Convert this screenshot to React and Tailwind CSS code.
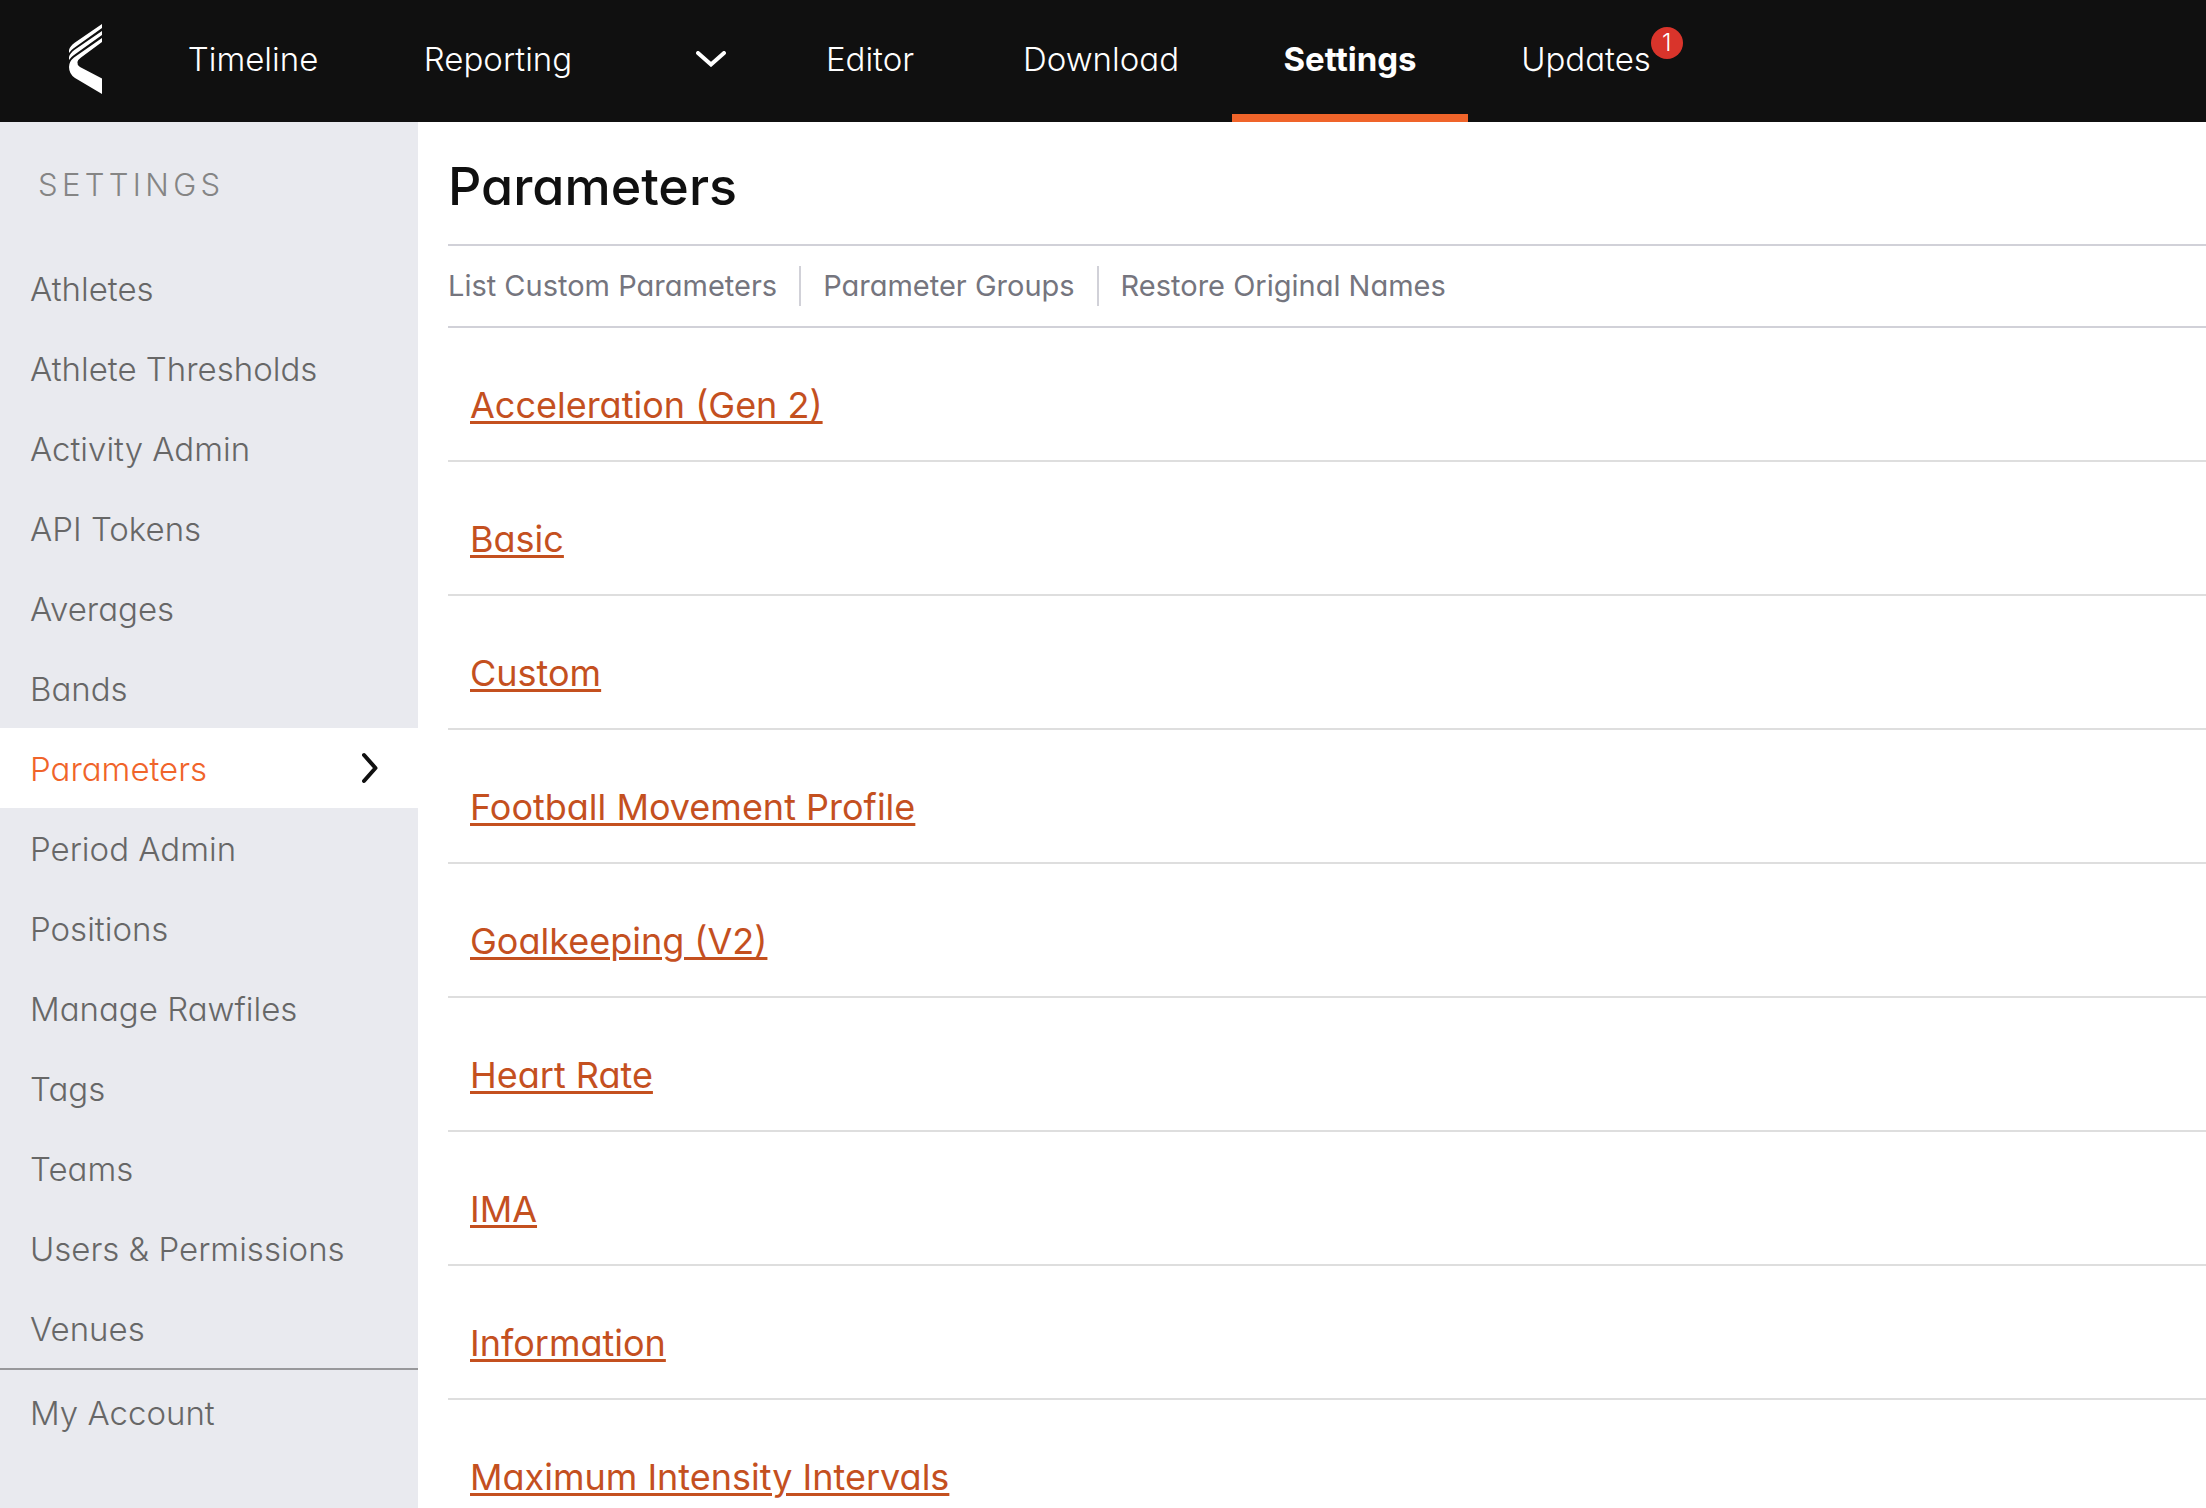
const navItems = [
  { label: 'Timeline', width: 'w-[234px]' },
  { label: 'Reporting', width: 'w-[256px]', hasMenu: true },
  { label: 'Editor', width: 'w-[200px]' },
  { label: 'Download', width: 'w-[262px]' },
  { label: 'Settings', width: 'w-[236px]', active: true },
  { label: 'Updates', width: 'w-[236px]', badge: 1 },
];

const settingsItems = [
  'Athletes',
  'Athlete Thresholds',
  'Activity Admin',
  'API Tokens',
  'Averages',
  'Bands',
  'Parameters',
  'Period Admin',
  'Positions',
  'Manage Rawfiles',
  'Tags',
  'Teams',
  'Users & Permissions',
  'Venues',
];

const actions = ['List Custom Parameters', 'Parameter Groups', 'Restore Original Names'];

const parameterGroups = [
  'Acceleration (Gen 2)',
  'Basic',
  'Custom',
  'Football Movement Profile',
  'Goalkeeping (V2)',
  'Heart Rate',
  'IMA',
  'Information',
  'Maximum Intensity Intervals',
];

function Logo() {
  return (
    <svg viewBox="0 0 33 70" className="h-[70px] w-[33px]" fill="white" aria-hidden="true">
      <path d="M33 0v4L5 24Q2 26 0 29V26Q1 22 6 18.500z" />
      <path d="M33 7v4L5 31Q2 33 0 36V33Q1 29 6 25.500z" />
      <path d="M33 14v4L12 33.500Q5 38.500 11 43L33 54.500V70L6 54Q0 50 0 43 0 37.500 5 33.500z" />
    </svg>
  );
}

function TopNav() {
  return (
    <header className="flex h-[122px] bg-[#101010] text-[33px] font-[350] text-white">
      <a href="#home" aria-label="Home" className="flex w-[136px] shrink-0 items-center pb-1 pl-[69px]">
        <Logo />
      </a>
      <nav className="flex">
        {navItems.map((item) => (
          <div key={item.label} className="flex">
            <a
              href={`#${item.label.toLowerCase()}`}
              className={`flex items-center justify-center border-b-8 pt-1.5 ${item.width} ${
                item.active ? 'border-b-[#f0642a] font-bold' : 'border-b-transparent'
              }`}
            >
              <span className="relative">
                {item.label}
                {item.badge && (
                  <span className="absolute -top-2 left-full flex size-8 items-center justify-center rounded-full bg-[#d9342b] text-2xl">
                    {item.badge}
                  </span>
                )}
              </span>
            </a>
            {item.hasMenu && (
              <button type="button" aria-label="Reporting menu" className="flex w-[144px] items-center justify-end pr-11 pb-1">
                <svg viewBox="0 0 30 16" className="h-4 w-[30px]" fill="none" stroke="white" strokeWidth="4" strokeLinecap="round">
                  <path d="M2 2l13 11.500L28 2" />
                </svg>
              </button>
            )}
          </div>
        ))}
      </nav>
    </header>
  );
}

function Sidebar() {
  return (
    <aside className="w-[418px] shrink-0 bg-[#e9eaef] text-[33px] font-[350] text-[#676767]">
      <h2 className="flex h-[126px] items-center pl-[38px] text-[31px] tracking-[0.14em] text-[#858585]">SETTINGS</h2>
      <ul className="mb-0.5 border-b-2 border-[#98989b]">
        {settingsItems.map((item) => {
          const active = item === 'Parameters';
          return (
            <li key={item}>
              <a
                href="#"
                className={`flex h-20 items-center justify-between pt-1 pr-10 pl-[30px] ${active ? 'bg-white text-[#f0642a]' : ''}`}
              >
                {item}
                {active && (
                  <svg viewBox="0 0 16 32" className="mb-1 h-8 w-4" fill="none" stroke="#101010" strokeWidth="4" strokeLinecap="round" strokeLinejoin="round">
                    <path d="M2 3l11.500 13L2 29" />
                  </svg>
                )}
              </a>
            </li>
          );
        })}
      </ul>
      <a href="#account" className="flex h-20 items-center pt-1 pl-[30px]">
        My Account
      </a>
    </aside>
  );
}

export default function App() {
  return (
    <div className="flex h-screen flex-col overflow-hidden bg-white font-['Inter',sans-serif] [font-feature-settings:'cv11']">
      <TopNav />
      <div className="flex min-h-0 flex-1">
        <Sidebar />
        <main className="min-w-0 flex-1 overflow-hidden pl-[30px]">
          <h1 className="flex h-[122px] items-center pt-2 text-[52px] font-medium text-[#101010]">Parameters</h1>
          <div className="flex h-[84px] items-center border-y-2 border-[#d1d1d8] text-[29px] text-[#75757e]">
            {actions.map((action) => (
              <a
                key={action}
                href="#"
                className="flex h-10 items-center border-l-2 border-[#d1d1d8] px-[22px] first:border-l-0 first:pl-0"
              >
                {action}
              </a>
            ))}
          </div>
          <ul>
            {parameterGroups.map((group) => (
              <li key={group} className="flex h-[134px] items-center border-b-2 border-[#dedede] pt-[22px] pl-[22px]">
                <a href="#" className="text-[36px] text-[#c4501f] underline decoration-3 underline-offset-3">
                  {group}
                </a>
              </li>
            ))}
          </ul>
        </main>
      </div>
    </div>
  );
}
